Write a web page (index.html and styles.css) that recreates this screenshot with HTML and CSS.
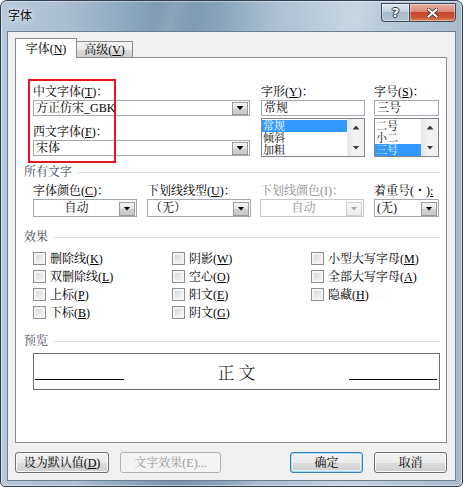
FILE: index.html
```html
<!DOCTYPE html>
<html lang="zh-CN">
<head>
<meta charset="utf-8">
<title>字体</title>
<link rel="stylesheet" href="styles.css">
</head>
<body>
<div class="window">
  <div class="titlebar">
    <span class="title">字体</span>
    <div class="caption">
      <div class="cbtn help">?</div>
      <div class="cbtn close">
        <svg width="11" height="10" viewBox="0 0 11 10"><path d="M1.5 1.5 L9.5 8.5 M9.5 1.5 L1.5 8.5" stroke="#3a2a26" stroke-width="3.6" stroke-linecap="square" fill="none"/><path d="M1.5 1.5 L9.5 8.5 M9.5 1.5 L1.5 8.5" stroke="#ffffff" stroke-width="2" stroke-linecap="square" fill="none"/></svg>
      </div>
    </div>
  </div>
  <div class="client">
    <div class="tabs">
      <div class="tab active">字体(<u>N</u>)</div>
      <div class="tab">高级(<u>V</u>)</div>
    </div>
    <div class="panel">
      <div class="fontsec">
        <div class="c1">
          <div class="lbl">中文字体(<u>T</u>)：</div>
          <div class="combo"><span class="val">方正仿宋_GBK</span><span class="dd"><i class="tri"></i></span></div>
          <div class="lbl lbl2">西文字体(<u>F</u>)：</div>
          <div class="combo"><span class="val">宋体</span><span class="dd"><i class="tri"></i></span></div>
        </div>
        <div class="c2">
          <div class="lbl">字形(<u>Y</u>)：</div>
          <div class="tbox">常规</div>
          <div class="list">
            <div class="items">
              <div class="item sel">常规</div>
              <div class="item">倾斜</div>
              <div class="item">加粗</div>
            </div>
            <div class="sb"><span class="sba"><i class="tri up"></i></span><span class="sba"><i class="tri"></i></span></div>
          </div>
        </div>
        <div class="c3">
          <div class="lbl">字号(<u>S</u>)：</div>
          <div class="tbox">三号</div>
          <div class="list">
            <div class="items">
              <div class="item">二号</div>
              <div class="item">小二</div>
              <div class="item sel">三号</div>
            </div>
            <div class="sb"><span class="sba"><i class="tri up"></i></span><span class="sba"><i class="tri"></i></span></div>
          </div>
        </div>
      </div>

      <div class="group g1"><span>所有文字</span></div>
      <div class="allrow">
        <div class="a1">
          <div class="lbl">字体颜色(<u>C</u>)：</div>
          <div class="combo tall"><span class="val center">自动</span><span class="dd"><i class="tri"></i></span></div>
        </div>
        <div class="a2">
          <div class="lbl">下划线线型(<u>U</u>)：</div>
          <div class="combo tall"><span class="val">（无）</span><span class="dd"><i class="tri"></i></span></div>
        </div>
        <div class="a3">
          <div class="lbl disabled">下划线颜色(I)：</div>
          <div class="combo tall off"><span class="val center">自动</span><span class="dd"><i class="tri"></i></span></div>
        </div>
        <div class="a4">
          <div class="lbl">着重号(・)<u>:</u></div>
          <div class="combo tall"><span class="val">(无)</span><span class="dd"><i class="tri"></i></span></div>
        </div>
      </div>

      <div class="group g2"><span>效果</span></div>
      <div class="effects">
        <div class="cb"><span class="box"></span><span>删除线(<u>K</u>)</span></div>
        <div class="cb"><span class="box"></span><span>阴影(<u>W</u>)</span></div>
        <div class="cb"><span class="box"></span><span>小型大写字母(<u>M</u>)</span></div>
        <div class="cb"><span class="box"></span><span>双删除线(<u>L</u>)</span></div>
        <div class="cb"><span class="box"></span><span>空心(<u>O</u>)</span></div>
        <div class="cb"><span class="box"></span><span>全部大写字母(<u>A</u>)</span></div>
        <div class="cb"><span class="box"></span><span>上标(<u>P</u>)</span></div>
        <div class="cb"><span class="box"></span><span>阳文(<u>E</u>)</span></div>
        <div class="cb"><span class="box"></span><span>隐藏(<u>H</u>)</span></div>
        <div class="cb"><span class="box"></span><span>下标(<u>B</u>)</span></div>
        <div class="cb"><span class="box"></span><span>阴文(<u>G</u>)</span></div>
      </div>

      <div class="group g3"><span>预览</span></div>
      <div class="preview">
        <span class="pline left"></span>
        <span class="ptext">正文</span>
        <span class="pline right"></span>
      </div>

      <div class="redbox"></div>
    </div>
    <div class="buttons">
      <div class="btn b1">设为默认值(<u>D</u>)</div>
      <div class="btn b2 off">文字效果(E)...</div>
      <div class="btn b3 default">确定</div>
      <div class="btn b4">取消</div>
    </div>
  </div>
</div>
</body>
</html>
```

FILE: styles.css
```css
* { box-sizing: border-box; }
html, body { margin: 0; padding: 0; }
body {
  width: 463px;
  height: 487px;
  overflow: hidden;
  background: #ffffff;
  font-family: "Liberation Serif", "Noto Serif CJK SC", "Noto Sans CJK SC", serif;
  font-size: 12px;
  color: #000;
}
u { text-decoration: underline; text-underline-offset: 1px; }

.window {
  width: 463px;
  height: 487px;
  border: 1px solid #2e3d4d;
  border-radius: 7px 7px 5px 5px;
  display: flex;
  flex-direction: column;
  background:
    linear-gradient(102deg, rgba(255,255,255,0) 28%, rgba(255,255,255,0.14) 31%, rgba(255,255,255,0) 35%, rgba(255,255,255,0) 60%, rgba(255,255,255,0.12) 64%, rgba(255,255,255,0) 68%),
    linear-gradient(90deg, #b9cadb 0%, #aabed0 14%, #8ca7bd 28%, #7995ad 38%, #8aa5bb 48%, #aec1d2 60%, #c3d2df 74%, #b5c6d6 88%, #a9bccf 100%);
  box-shadow: inset 0 0 0 1px rgba(255,255,255,0.45);
}

.titlebar {
  height: 30px;
  flex: none;
  display: flex;
  align-items: flex-start;
}
.title {
  font-family: "Noto Sans CJK SC", sans-serif;
  font-size: 12px;
  line-height: 16px;
  margin: 6px 0 0 7px;
  color: #000;
  text-shadow: 0 0 6px rgba(255,255,255,0.9), 0 0 3px rgba(255,255,255,0.8);
}
.caption {
  margin: 2px 6px 0 auto;
  display: flex;
}
.cbtn {
  height: 19px;
  border: 1px solid #3a4c5e;
  display: flex;
  align-items: center;
  justify-content: center;
  box-shadow: inset 0 0 0 1px rgba(255,255,255,0.35);
}
.help {
  width: 28px;
  border-right: none;
  border-radius: 0 0 0 4px;
  background: linear-gradient(#dde6ee 0%, #c3d0dc 45%, #a7b8c9 50%, #b6c6d5 100%);
  color: #fff;
  font-family: "DejaVu Sans", sans-serif;
  font-weight: bold;
  font-size: 13px;
  line-height: 13px;
  text-shadow: 0 0 1px #1c2733, 1px 0 0 #2a3947, -1px 0 0 #2a3947, 0 1px 0 #2a3947, 0 -1px 0 #2a3947;
}
.close {
  width: 47px;
  border-radius: 0 0 4px 0;
  background: linear-gradient(#eab1a4 0%, #db8876 44%, #c5472f 50%, #cc5237 78%, #e2895f 100%);
}

.client {
  flex: 1;
  margin: 0 6px 5px 6px;
  background: #f0f0f0;
  border: 1px solid #6b7f93;
  display: flex;
  flex-direction: column;
}

.tabs {
  height: 25px;
  flex: none;
  display: flex;
  align-items: flex-end;
  padding-left: 7px;
}
.tab {
  height: 16px;
  width: 57px;
  margin-left: -1px;
  border: 1px solid #898c95;
  border-bottom: none;
  background: linear-gradient(#f3f3f3 0%, #ebebeb 50%, #dddddd 50%, #cfcfcf 100%);
  display: flex;
  align-items: center;
  justify-content: center;
  padding-top: 1px;
  line-height: 14px;
  white-space: nowrap;
}
.tab.active {
  height: 20px;
  width: 62px;
  margin-left: 0;
  margin-bottom: -1px;
  background: #fff;
  position: relative;
  z-index: 1;
}

.panel {
  position: relative;
  flex: none;
  height: 386px;
  margin: 0 8px 0 7px;
  border: 1px solid #898c95;
  background: #fff;
}

.lbl {
  height: 16px;
  line-height: 16px;
  white-space: nowrap;
}
.lbl.disabled { color: #8d8d8d; }
.lbl2 { margin-top: 8px; }

.fontsec {
  display: flex;
  margin-top: 26px;
  padding-left: 17px;
}
.c1 { width: 217px; }
.c2 { width: 104px; margin-left: 11px; }
.c3 { width: 65px; margin-left: 9px; }

.combo {
  height: 16px;
  border: 1px solid #a3a9b1;
  display: flex;
  align-items: center;
  background: #fff;
}
.combo.tall { height: 18px; }
.combo .val {
  flex: 1;
  padding-left: 2px;
  line-height: 14px;
  white-space: nowrap;
  overflow: hidden;
}
.combo .val.center { text-align: center; padding-left: 0; }
.dd {
  width: 16px;
  height: 13px;
  margin-right: 1px;
  border: 1px solid #9a9a9a;
  background: linear-gradient(#f4f4f4 0%, #e3e3e3 50%, #d2d2d2 51%, #c9c9c9 100%);
  display: flex;
  align-items: center;
  justify-content: center;
}
.combo.tall .dd { height: 14px; margin-top: 1px; }
.tri {
  display: block;
  width: 7px;
  height: 4px;
  background: #000;
  clip-path: polygon(0 0, 100% 0, 50% 100%);
}
.tri.up { clip-path: polygon(50% 0, 100% 100%, 0 100%); }
.combo.off { border-color: #c5c9cd; color: #8d8d8d; }
.combo.off .dd { border-color: #d0d0d0; background: linear-gradient(#f7f7f7, #ececec); }
.combo.off .tri { background: #a8a8a8; }

.tbox {
  height: 16px;
  border: 1px solid #a3a9b1;
  padding-left: 2px;
  line-height: 14px;
  white-space: nowrap;
}
.list {
  margin-top: 2px;
  height: 39px;
  border: 1px solid #82878f;
  display: flex;
}
.items {
  flex: 1;
  padding-top: 1px;
  overflow: hidden;
}
.item {
  height: 12px;
  line-height: 12px;
  font-size: 11px;
  padding-left: 1px;
  white-space: nowrap;
  overflow: hidden;
}
.item.sel { background: #3399ff; color: #fff; }
.sb {
  width: 17px;
  display: flex;
  flex-direction: column;
  justify-content: space-between;
  background: linear-gradient(90deg, #e6e6e6, #f4f4f4 40%, #f0f0f0);
  border-left: 1px solid #ececec;
}
.sba {
  height: 17px;
  display: flex;
  align-items: center;
  justify-content: center;
}
.sba .tri { background: #3a3a3a; }

.group {
  display: flex;
  align-items: center;
  height: 16px;
  line-height: 16px;
  margin: 0 6px 0 8px;
  color: #3c4652;
}
.group span { white-space: nowrap; }
.group::after {
  content: "";
  flex: 1;
  height: 1px;
  margin-left: 5px;
  background: #d5dfe6;
}
.g1 { margin-top: 7px; }
.g2 { margin-top: 12px; }
.g3 { margin-top: 12px; }

.allrow {
  display: flex;
  margin-top: 3px;
  padding-left: 17px;
}
.a1 { width: 104px; }
.a2 { width: 104px; margin-left: 10px; }
.a3 { width: 104px; margin-left: 9px; }
.a4 { width: 65px; margin-left: 10px; }

.effects {
  display: grid;
  grid-template-columns: 139px 139px 1fr;
  grid-auto-rows: 18px;
  margin-top: 4px;
  padding-left: 17px;
}
.cb {
  display: flex;
  align-items: center;
  white-space: nowrap;
}
.box {
  width: 13px;
  height: 13px;
  flex: none;
  margin-right: 4px;
  border: 1px solid #8e8f8f;
  background: linear-gradient(135deg, #cfd1d4 0%, #e6e7e8 50%, #fafafa 100%);
  box-shadow: inset 0 0 0 2px #f4f4f4;
}

.preview {
  margin: 4px 6px 0 17px;
  height: 37px;
  border: 1px solid #6d6d6d;
  display: flex;
  align-items: center;
}
.pline {
  height: 1px;
  background: #000;
  margin-top: 15px;
  flex: none;
}
.pline.left { width: 89px; margin-left: 1px; }
.pline.right { width: 88px; margin-right: 2px; }
.ptext {
  flex: 1;
  text-align: center;
  font-family: "Noto Serif CJK SC", "Noto Sans CJK SC", serif;
  font-size: 17px;
  font-weight: 300;
  letter-spacing: 4px;
  padding-left: 4px;
  line-height: 20px;
  color: #111;
}

.redbox {
  position: absolute;
  left: 12px;
  top: 21px;
  width: 88px;
  height: 84px;
  border: 2px solid #e8141b;
}

.buttons {
  display: flex;
  margin-top: 9px;
  padding: 0 8px 0 7px;
}
.btn {
  height: 21px;
  border: 1px solid #707070;
  border-radius: 3px;
  background: linear-gradient(#f2f2f2 0%, #ebebeb 50%, #dddddd 51%, #cfcfcf 100%);
  box-shadow: inset 0 0 0 1px #fbfbfb;
  display: flex;
  align-items: center;
  justify-content: center;
  line-height: 14px;
  white-space: nowrap;
}
.b1 { width: 94px; }
.b2 { width: 101px; margin-left: 11px; }
.b3 { width: 73px; margin-left: auto; }
.b4 { width: 73px; margin-left: 11px; }
.btn.off {
  border-color: #adb2b5;
  background: #f4f4f4;
  box-shadow: none;
  color: #9a9a9a;
}
.btn.default {
  border-color: #3c7fb1;
  box-shadow: inset 0 0 0 1px #9fdcf8, inset 0 0 0 2px rgba(255,255,255,0.5);
}
```
